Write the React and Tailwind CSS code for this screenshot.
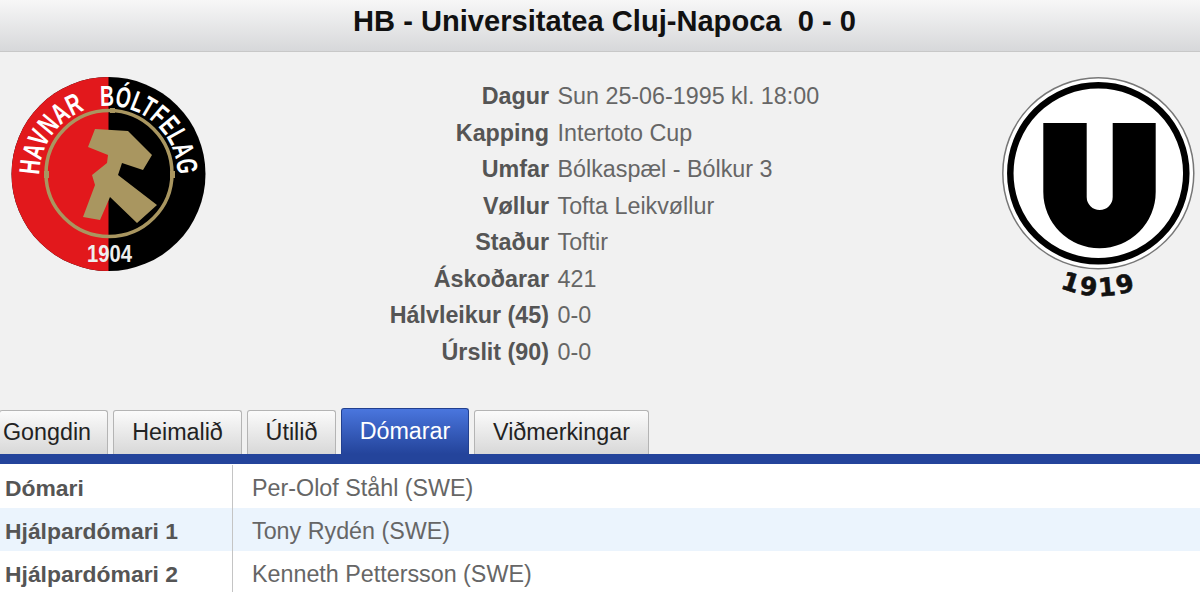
const infoRows = [
  ["Dagur", "Sun 25-06-1995 kl. 18:00"],
  ["Kapping", "Intertoto Cup"],
  ["Umfar", "Bólkaspæl - Bólkur 3"],
  ["Vøllur", "Tofta Leikvøllur"],
  ["Staður", "Toftir"],
  ["Áskoðarar", "421"],
  ["Hálvleikur (45)", "0-0"],
  ["Úrslit (90)", "0-0"],
];

const tabs = [
  { label: "Gongdin", className: "w-[109px] -ml-[1px] pl-[3px] justify-start" },
  { label: "Heimalið", className: "w-[129px] justify-center" },
  { label: "Útilið", className: "w-[89px] justify-center" },
  { label: "Dómarar", active: true, className: "w-[128px] justify-center" },
  { label: "Viðmerkingar", className: "w-[175px] justify-center" },
];

const referees = [
  ["Dómari", "Per-Olof Ståhl (SWE)"],
  ["Hjálpardómari 1", "Tony Rydén (SWE)"],
  ["Hjálpardómari 2", "Kenneth Pettersson (SWE)"],
];

const HbLogo = () => (
  <svg width="196" height="196" viewBox="0 0 196 196" className="block">
    <defs>
      <path id="hb-arc" d="M 28.5 98 A 69 69 0 0 1 166.5 98" />
    </defs>
    <circle cx="97.5" cy="97" r="97" fill="#000" />
    <path d="M 97.5 0 A 97 97 0 0 0 97.5 194 Z" fill="#e2181c" />
    <circle cx="98" cy="96.5" r="63" fill="none" stroke="#a99660" strokeWidth="3.5" />
    {/* small steps where the gold ring overlaps */}
    <rect x="33" y="94" width="5" height="7" fill="#a99660" />
    <rect x="99" y="31" width="5" height="5" fill="#a99660" />
    <rect x="159" y="94" width="5" height="7" fill="#a99660" />
    <path
      d="M 84 52 L 117 54 L 141 78 L 132 93 L 111 86 L 107 98 L 146 128 L 126 146 L 99 120 L 89 143 L 72 140 L 84 108 L 81 98 L 96 86 L 97 78 L 77 70 Z"
      fill="#a99660"
    />
    <text fontFamily="Liberation Sans, sans-serif" fontWeight="700" fontSize="29" fill="#fff">
      <textPath href="#hb-arc" textLength="84" lengthAdjust="spacingAndGlyphs">
        HAVNAR
      </textPath>
    </text>
    <text fontFamily="Liberation Sans, sans-serif" fontWeight="700" fontSize="29" fill="#fff">
      <textPath href="#hb-arc" startOffset="100" textLength="116" lengthAdjust="spacingAndGlyphs">
        BÓLTFELAG
      </textPath>
    </text>
    <text
      x="98.5"
      y="185"
      textAnchor="middle"
      fontFamily="Liberation Sans, sans-serif"
      fontWeight="700"
      fontSize="23"
      textLength="45"
      lengthAdjust="spacingAndGlyphs"
      fill="#eee"
    >
      1904
    </text>
  </svg>
);

const ClujLogo = () => (
  <svg width="200" height="232" viewBox="0 0 200 232" className="block">
    <defs>
      <path id="cluj-arc" d="M 60 210.6 A 100 100 0 0 0 140 210.6" />
    </defs>
    <circle cx="98.3" cy="96.3" r="95.5" fill="#fff" stroke="#777" strokeWidth="1.5" />
    <circle cx="98.3" cy="96.3" r="88" fill="#fff" stroke="#000" strokeWidth="6.5" />
    <path
      d="M 43.3 46 L 86.7 46 L 86.7 120 A 13 13 0 0 0 112.7 120 L 112.7 46 L 155.7 46 L 155.7 115 A 56.2 56.2 0 0 1 43.3 115 Z"
      fill="#000"
    />
    <text fontFamily="DejaVu Sans, sans-serif" fontWeight="700" fontSize="25" letterSpacing="2.6" fill="#111" stroke="#111" strokeWidth="0.6">
      <textPath href="#cluj-arc">1919</textPath>
    </text>
  </svg>
);

export default function App() {
  return (
    <div className="h-[592px] w-[1200px] overflow-hidden bg-white font-['Liberation_Sans',Arial,sans-serif]">
      <div className="flex h-[52px] items-center justify-center border-b border-[#c8c8c8] bg-gradient-to-b from-[#f7f7f7] to-[#d7d8da] pb-[8px] pl-[9px] text-[29.1px] font-bold whitespace-pre text-[#111]">
        HB - Universitatea Cluj-Napoca  0 - 0
      </div>

      <div className="bg-[#f1f1f1]">
        <div className="flex h-[356px] items-start">
          <div className="w-[208px] pt-[25px] pl-[11px]">
            <HbLogo />
          </div>
          <div className="flex-1 pt-[26.5px]">
            {infoRows.map(([label, value]) => (
              <div key={label} className="flex h-[36.5px] items-center text-[23.3px]">
                <div className="w-[341px] text-right font-bold text-[#555]">{label}</div>
                <div className="pl-[8.5px] text-[#666]">{value}</div>
              </div>
            ))}
          </div>
          <div className="w-[200px] pt-[25px]">
            <ClujLogo />
          </div>
        </div>

        <div className="flex h-[46px] items-end gap-[5px]">
          {tabs.map((tab) => (
            <div
              key={tab.label}
              className={
                tab.active
                  ? `flex h-[46px] items-center rounded-t-[3px] border border-b-0 border-[#22408f] bg-gradient-to-b from-[#4a76de] to-[#24449b] text-[23.3px] font-normal text-white ${tab.className}`
                  : `flex h-[44px] items-center rounded-t-[3px] border border-b-0 border-[#b4b4b4] bg-gradient-to-b from-[#fbfbfb] to-[#d8d8d8] pb-[1px] text-[23.3px] text-[#222] ${tab.className}`
              }
            >
              {tab.label}
            </div>
          ))}
        </div>
      </div>

      <div className="h-[10px] bg-[#24449b]" />

      <div className="pt-[1px]">
        {referees.map(([role, name], index) => (
          <div
            key={role}
            className={`flex h-[43px] items-center text-[23.3px] text-[#666] ${index === 1 ? "bg-[#ebf4fd]" : "bg-white"}`}
          >
            <div className="flex h-full w-[233px] items-center border-r border-[#c4c4c4] pt-[4px] pl-[5px] text-[22.9px] font-bold text-[#555]">
              {role}
            </div>
            <div className="pt-[4px] pl-[19px]">{name}</div>
          </div>
        ))}
      </div>
    </div>
  );
}
